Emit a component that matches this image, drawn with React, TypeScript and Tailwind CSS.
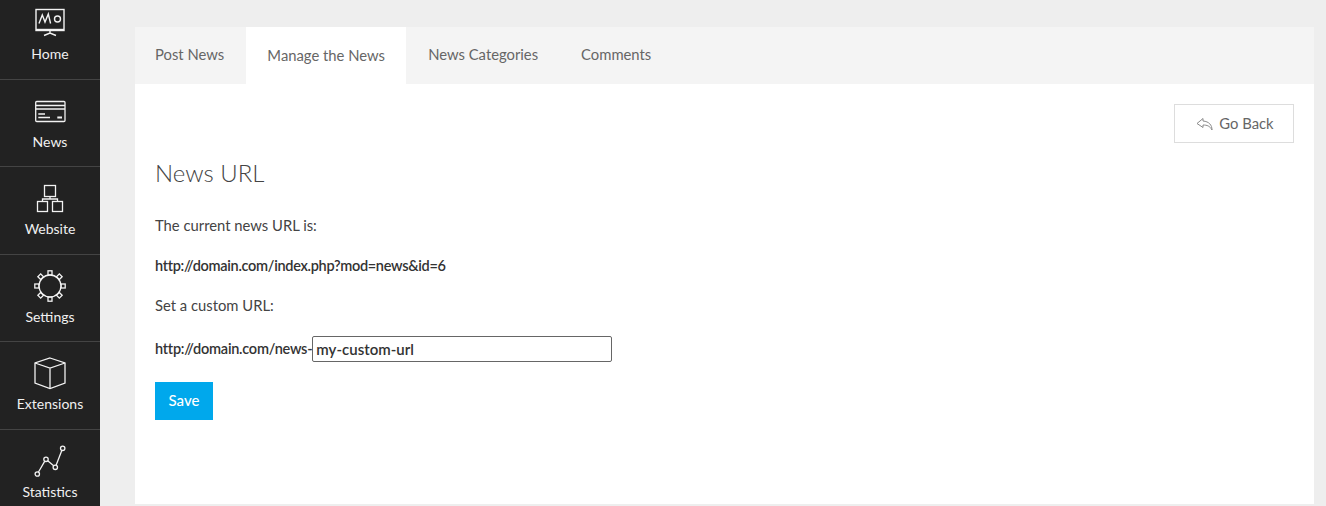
import React from "react";

const iconCls = "w-[36px] h-[36px] text-[#f2f2f2]";

function HomeIcon() {
  return (
    <svg viewBox="0 0 36 36" className={iconCls} fill="none" stroke="currentColor" strokeWidth="1.4">
      <rect x="4" y="3.500" width="28" height="21" />
      <path d="M4 23.500h28" />
      <path d="M7 17.500L10.300 9l2.700 7 3.300-8 2.300 9.500" />
      <circle cx="25.500" cy="13" r="3" />
      <path d="M18 24.500v2.500M12 29.500l6-2.500 6 2.500" />
    </svg>
  );
}
function NewsIcon() {
  return (
    <svg viewBox="0 0 36 36" className={iconCls} fill="none" stroke="currentColor" strokeWidth="1.3">
      <rect x="3.700" y="7.500" width="29.300" height="20" rx="1" />
      <path d="M3.700 11.500h29.300M3.700 15h29.300M6.300 20h6.700M6.300 23.500h11.700" />
      <path d="M25.300 23.500h4.700" strokeWidth="2" />
    </svg>
  );
}
function WebsiteIcon() {
  return (
    <svg viewBox="0 0 36 36" className={iconCls} fill="none" stroke="currentColor" strokeWidth="1.3">
      <rect x="12.500" y="4.500" width="11" height="11" />
      <rect x="5.500" y="20.500" width="10" height="10" />
      <rect x="20.500" y="20.500" width="10" height="10" />
      <path d="M18 15.500v2.500M10.500 20.500V18h15v2.500" />
    </svg>
  );
}
function SettingsIcon() {
  const a = [0, 45, 90, 135, 180, 225, 270, 315];
  return (
    <svg viewBox="0 0 36 36" className={iconCls} fill="none" stroke="currentColor" strokeWidth="1.3">
      <circle cx="18" cy="17" r="11" />
      {a.map((d) => (
        <rect key={d} x="16" y="1.800" width="4" height="4" transform={`rotate(${d} 18 17)`} fill="#222222" />
      ))}
    </svg>
  );
}
function ExtensionsIcon() {
  return (
    <svg viewBox="0 0 36 36" className={iconCls} fill="none" stroke="currentColor" strokeWidth="1.3">
      <path d="M18 2l15 5v20l-15 5.500L3 27V7z" />
      <path d="M3 7l15 5 15-5M18 12v20.500" />
    </svg>
  );
}
function StatsIcon() {
  return (
    <svg viewBox="0 0 36 36" className={iconCls} fill="none" stroke="currentColor" strokeWidth="1.3">
      <circle cx="5.300" cy="30" r="2.200" />
      <circle cx="14" cy="15.300" r="2.200" />
      <circle cx="23.300" cy="23.300" r="2.200" />
      <circle cx="30.700" cy="4.300" r="2.200" />
      <path d="M6.500 28l6.300-10.800M15.700 16.800l6 5M24.100 21.200l5.800-14.900" />
    </svg>
  );
}
function BackIcon() {
  return (
    <svg viewBox="0 0 18 14" className="w-[18px] h-[14px] text-[#8a8a8a]" fill="none" stroke="currentColor" strokeWidth="1">
      <path d="M7 1.500L1 6.500l6 4V8c4 0 7 1 9 5 0-5-3-8.500-9-9z" />
    </svg>
  );
}

const nav = [
  { label: "Home", icon: <HomeIcon /> },
  { label: "News", icon: <NewsIcon /> },
  { label: "Website", icon: <WebsiteIcon /> },
  { label: "Settings", icon: <SettingsIcon /> },
  { label: "Extensions", icon: <ExtensionsIcon /> },
  { label: "Statistics", icon: <StatsIcon /> },
];

export default function App() {
  return (
    <div className="flex h-[506px] w-[1326px] overflow-hidden bg-[#eeeeee] font-['Lato','Noto_Sans',sans-serif] text-[#444444]">
      <aside className="w-[100px] shrink-0 overflow-hidden bg-[#222222]">
        <div className="-mt-[7.6px]">
          {nav.map((n) => (
            <div
              key={n.label}
              className="flex h-[87.5px] flex-col items-center border-b border-[#444444] pt-[14px] text-[14px] leading-[20px] text-[#f0f0f0]"
            >
              {n.icon}
              <span className="mt-[1.7px]">{n.label}</span>
            </div>
          ))}
        </div>
      </aside>
      <main className="flex-1 pl-[35px] pr-[12px] pt-[27px]">
        <div className="h-[477px] bg-white">
          <div className="flex h-[57px] bg-[#f4f4f4] text-[14.8px] text-[#666666]">
            <div className="flex items-center pb-[2px] pl-[20px] pr-[22px]">Post News</div>
            <div className="flex w-[160px] items-center justify-center bg-white">Manage the News</div>
            <div className="flex items-center pb-[2px] pl-[22px] pr-[22px]">News Categories</div>
            <div className="flex items-center pb-[2px] px-[21px]">Comments</div>
          </div>
          <div className="px-[20px]">
            <div className="flex justify-end pt-[20px]">
              <div className="flex h-[39px] w-[120px] items-center justify-center gap-[5px] border border-[#dddddd] pl-[2px] text-[14.8px] text-[#666666]">
                <BackIcon />
                Go Back
              </div>
            </div>
            <h1 className="mt-[14px] text-[24px] font-light leading-[32px] text-[#444444]">News URL</h1>
            <p className="mt-[26px] text-[14.8px] leading-[20px]">The current news URL is:</p>
            <p className="mt-[21px] text-[14.5px] font-semibold leading-[20px] tracking-[-0.3px] text-[#333333]">http://domain.com/index.php?mod=news&amp;id=6</p>
            <p className="mt-[19px] text-[14.8px] leading-[20px]">Set a custom URL:</p>
            <div className="mt-[21px] flex h-[26px] items-center pb-[1px] text-[14.5px] font-semibold tracking-[-0.25px] text-[#333333]">
              <span>http://domain.com/news-</span>
              <input
                readOnly
                value="my-custom-url"
                className="h-[26px] w-[300px] rounded-[2px] border border-[#666666] px-[3px] text-[15px] font-semibold tracking-[0px] text-[#333333] outline-none"
              />
            </div>
            <button className="mt-[20px] flex h-[38px] w-[58px] items-center justify-center bg-[#00a8ec] pb-[2px] text-[15px] font-medium text-white">
              Save
            </button>
          </div>
        </div>
      </main>
    </div>
  );
}
